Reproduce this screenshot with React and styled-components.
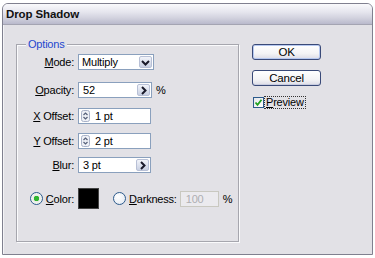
import React from "react"
import styled, { createGlobalStyle } from "styled-components"

const GlobalStyle = createGlobalStyle`
  html, body {
    margin: 0;
    padding: 0;
    background: #fff;
  }
  body {
    font-family: "Liberation Sans", Arial, sans-serif;
    font-size: 11px;
    letter-spacing: -0.2px;
    color: #000;
  }
`

function Chevron({ dir }) {
    const pts = dir === "down" ? "2,4 5.5,7.5 9,4" : "4,2 7.5,5.5 4,9"
    return (
        <svg width="11" height="11" viewBox="0 0 11 11">
            <polyline points={pts} fill="none" stroke="#1a1a2a" strokeWidth="2" />
        </svg>
    )
}

function SpinIcon() {
    return (
        <svg width="9" height="12" viewBox="0 0 9 12">
            <rect x="0.5" y="0.5" width="8" height="11" rx="2" fill="#eef0f6" stroke="#a9b2c8" />
            <polyline points="2.5,5 4.5,3 6.5,5" fill="none" stroke="#55607a" strokeWidth="1.2" />
            <polyline points="2.5,7 4.5,9 6.5,7" fill="none" stroke="#55607a" strokeWidth="1.2" />
        </svg>
    )
}

function App() {
    return (
        <>
            <GlobalStyle />
            <Window>
                <TitleBar>Drop Shadow</TitleBar>
                <Body>
                    <Group>
                        <Legend>Options</Legend>
                        <Row $mt={9}>
                            <Label><span><u>M</u>ode:</span></Label>
                            <Field $w={76}>
                                <Value>Multiply</Value>
                                <SideButton><Chevron dir="down" /></SideButton>
                            </Field>
                        </Row>
                        <Row $mt={12}>
                            <Label><span><u>O</u>pacity:</span></Label>
                            <Field $w={74}>
                                <Value $pl={4}>52</Value>
                                <SideButton><Chevron dir="right" /></SideButton>
                            </Field>
                            <Unit>%</Unit>
                        </Row>
                        <Row $mt={10}>
                            <Label><span><u>X</u> Offset:</span></Label>
                            <Field $w={73}>
                                <Spin><SpinIcon /></Spin>
                                <Value $pl={5}>1 pt</Value>
                            </Field>
                        </Row>
                        <Row $mt={9}>
                            <Label><span><u>Y</u> Offset:</span></Label>
                            <Field $w={73}>
                                <Spin><SpinIcon /></Spin>
                                <Value $pl={5}>2 pt</Value>
                            </Field>
                        </Row>
                        <Row $mt={8}>
                            <Label><span><u>B</u>lur:</span></Label>
                            <Field $w={73}>
                                <Value $pl={4}>3 pt</Value>
                                <SideButton><Chevron dir="right" /></SideButton>
                            </Field>
                        </Row>
                        <Row $mt={15} $h={21}>
                            <Label>
                                <Radio $on />
                                <span><u>C</u>olor:</span>
                            </Label>
                            <Swatch />
                            <Radio $ml={14} />
                            <RadioText><u>D</u>arkness:</RadioText>
                            <Field $w={39} $disabled>
                                <Value $pl={5}>100</Value>
                            </Field>
                            <Unit>%</Unit>
                        </Row>
                    </Group>
                    <Side>
                        <Button $default>OK</Button>
                        <Button>Cancel</Button>
                        <CheckRow>
                            <CheckBox>
                                <svg width="9" height="9" viewBox="0 0 9 9">
                                    <polyline points="1.5,4.5 3.5,6.8 7.5,1.8" fill="none" stroke="#21a121" strokeWidth="1.8" />
                                </svg>
                            </CheckBox>
                            <Focus><u>P</u>review</Focus>
                        </CheckRow>
                    </Side>
                </Body>
            </Window>
        </>
    )
}

const bg = "#e2e1e6"

const Window = styled.div`
    margin: 3px 0 0 2px;
    width: 371px;
    height: 252px;
    box-sizing: border-box;
    border: 1px solid #80808f;
    border-radius: 6px 6px 0 0;
    background: ${bg};
    display: flex;
    flex-direction: column;
    overflow: hidden;
`

const TitleBar = styled.div`
    height: 20px;
    line-height: 20px;
    padding-left: 3px;
    font-weight: bold;
    font-size: 11.5px;
    letter-spacing: -0.1px;
    color: #111;
    background: linear-gradient(#fafafc 0%, #e6e6ee 40%, #d2d2de 70%, #b9b9cc 100%);
`

const Body = styled.div`
    flex: 1;
    display: flex;
    align-items: flex-start;
    border-top: 1px solid #a4a4b2;
    box-shadow: inset 1px 0 0 #f4f4f7;
    padding: 19px 0 0 13px;
`

const Group = styled.div`
    position: relative;
    width: 223px;
    height: 198px;
    box-sizing: border-box;
    border: 1px solid #a6a6ae;
    box-shadow: 1px 1px 0 #fafafc, inset 1px 1px 0 #fafafc;
    display: flex;
    flex-direction: column;
`

const Legend = styled.span`
    position: absolute;
    top: -7px;
    left: 9px;
    padding: 0 2px;
    background: ${bg};
    color: #2247cf;
    line-height: 13px;
`

const Row = styled.div`
    display: flex;
    align-items: center;
    height: ${(p) => p.$h || 16}px;
    margin-top: ${(p) => p.$mt}px;
`

const Label = styled.div`
    width: 57px;
    margin-right: 4px;
    display: flex;
    justify-content: flex-end;
    align-items: center;
    gap: 3px;
    white-space: nowrap;
`

const Field = styled.div`
    width: ${(p) => p.$w}px;
    height: 16px;
    box-sizing: border-box;
    border: 1px solid ${(p) => (p.$disabled ? "#c9c8c0" : "#8aa0bd")};
    background: ${(p) => (p.$disabled ? "#ebeaee" : "#fff")};
    color: ${(p) => (p.$disabled ? "#aeaeb2" : "#000")};
    display: flex;
    align-items: center;
`

const Value = styled.span`
    flex: 1;
    padding-left: ${(p) => p.$pl || 3}px;
    white-space: nowrap;
`

const SideButton = styled.div`
    width: 13px;
    height: 12px;
    margin-right: 1px;
    border-radius: 2px;
    background: linear-gradient(#f2f4fa, #c9d0e2);
    border: 1px solid #b8c0d6;
    box-sizing: border-box;
    display: flex;
    align-items: center;
    justify-content: center;
`

const Spin = styled.div`
    display: flex;
    margin-left: 2px;
`

const Unit = styled.span`
    margin-left: 4px;
`

const Swatch = styled.div`
    width: 21px;
    height: 21px;
    box-sizing: border-box;
    background: #000;
    border: 1px solid #444;
`

const Radio = styled.span`
    width: 11px;
    height: 11px;
    margin-left: ${(p) => p.$ml || 0}px;
    border-radius: 50%;
    border: 1px solid #2c5a8c;
    background: ${(p) =>
        p.$on
            ? "radial-gradient(circle, #2fb52f 0 2.5px, #e8ece4 3px, #fff 100%)"
            : "radial-gradient(circle at 35% 35%, #fff, #dfe6f0)"};
    flex-shrink: 0;
`

const RadioText = styled.span`
    margin: 0 3px 0 3px;
`

const Side = styled.div`
    margin-left: 13px;
    display: flex;
    flex-direction: column;
    gap: 10px;
`

const Button = styled.div`
    width: 69px;
    height: 16px;
    box-sizing: border-box;
    border: 1px solid #3a4a78;
    border-radius: 3px;
    background: linear-gradient(#ffffff, #f4f4f6 60%, #dcdce6);
    box-shadow: ${(p) => (p.$default ? "inset 0 0 0 1px #b6c8f0" : "inset 0 -1px 0 #c8cce0")};
    font-size: 11.5px;
    line-height: 14px;
    text-align: center;
`

const CheckRow = styled.div`
    display: flex;
    align-items: center;
    margin-left: 1px;
    height: 12px;
`

const CheckBox = styled.div`
    width: 11px;
    height: 11px;
    box-sizing: border-box;
    border: 1px solid #2c5a8c;
    background: linear-gradient(135deg, #e4e6ea, #fff);
    display: flex;
    align-items: center;
    justify-content: center;
`

const Focus = styled.span`
    margin-left: 1px;
    outline: 1px dotted #333;
    line-height: 11px;
    padding: 0 1px;
`

export default App
